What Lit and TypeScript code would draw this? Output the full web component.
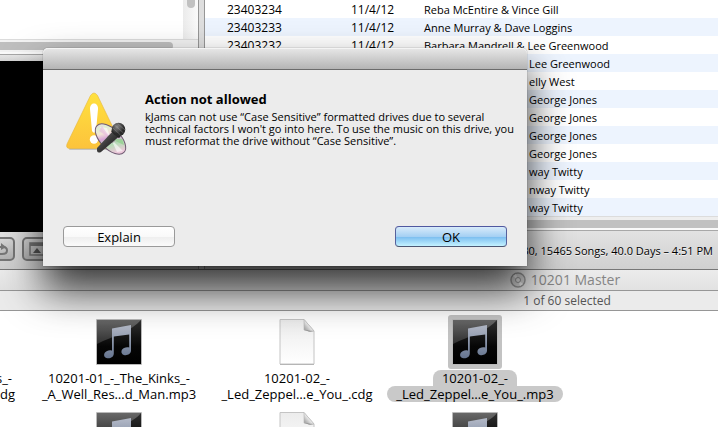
import { LitElement, html, css, svg } from "lit";
import { customElement, property } from "lit/decorators.js";
import { classMap } from "lit/directives/class-map.js";

const songs = [
  { id: "23403234", date: "11/4/12", artist: "Reba McEntire & Vince Gill" },
  { id: "23403233", date: "11/4/12", artist: "Anne Murray & Dave Loggins" },
  { id: "23403232", date: "11/4/12", artist: "Barbara Mandrell & Lee Greenwood" },
  { id: "", date: "", artist: "Lee Greenwood" },
  { id: "", date: "", artist: "elly West" },
  { id: "", date: "", artist: "George Jones" },
  { id: "", date: "", artist: "George Jones" },
  { id: "", date: "", artist: "George Jones" },
  { id: "", date: "", artist: "George Jones" },
  { id: "", date: "", artist: "way Twitty" },
  { id: "", date: "", artist: "nway Twitty" },
  { id: "", date: "", artist: "way Twitty" },
];

const files = [
  { kind: "cdg", lines: ["10201-01_-_The_Kinks_-", "_A_Well_Res…d_Man.cdg"], selected: false },
  { kind: "mp3", lines: ["10201-01_-_The_Kinks_-", "_A_Well_Res…d_Man.mp3"], selected: false },
  { kind: "cdg", lines: ["10201-02_-", "_Led_Zeppel…e_You_.cdg"], selected: false },
  { kind: "mp3", lines: ["10201-02_-", "_Led_Zeppel…e_You_.mp3"], selected: true },
  { kind: "cdg", lines: [], selected: false },
  { kind: "mp3", lines: [], selected: false },
  { kind: "cdg", lines: [], selected: false },
  { kind: "mp3", lines: [], selected: false },
];

const musicIcon = svg`
  <defs>
    <linearGradient id="gloss" x1="0" y1="0" x2="0" y2="1"><stop offset="0" stop-color="#686868"/><stop offset="1" stop-color="#303030"/></linearGradient>
    <linearGradient id="dark" x1="0" y1="0" x2="0" y2="1"><stop offset="0" stop-color="#303030"/><stop offset=".6" stop-color="#060606"/><stop offset="1" stop-color="#000"/></linearGradient>
    <linearGradient id="note" x1="0" y1="0" x2="0" y2="1"><stop offset="0" stop-color="#b4bac8"/><stop offset="1" stop-color="#65748f"/></linearGradient>
  </defs>
  <rect width="46" height="46" rx="1" fill="#b9b9b9"/>
  <rect x="1" y="1" width="44" height="44" fill="url(#dark)"/>
  <path d="M1 1H45C36 12 17 17 1 25Z" fill="url(#gloss)"/>
  <path d="M16 9.500 35 6V31.500C35 35 31 36.800 27.900 35.900 24.500 34.900 24.800 30.500 28 29 30 28 32 28 33.200 28.600V15.500L17.800 17.500V34.500C17.800 38.500 13.500 40 10.400 39 7.300 38 7.400 33.800 10.600 32.200 12.500 31.200 14.800 31 16 31.800Z" fill="url(#note)"/>`;

const documentIcon = svg`
  <defs>
    <linearGradient id="sheet" x1="0" y1="0" x2="0" y2="1"><stop offset="0" stop-color="#ececec"/><stop offset="1" stop-color="#fff"/></linearGradient>
    <linearGradient id="fold" x1="0" y1="1" x2="1" y2="0"><stop offset="0" stop-color="#8f8f8f"/><stop offset=".5" stop-color="#efefef"/><stop offset="1" stop-color="#fff"/></linearGradient>
  </defs>
  <path d="M6 .500H30L40 12V45H6Z" fill="url(#sheet)" stroke="#c4c4c4"/>
  <path d="M6 45.500H40" stroke="#b5b5b5"/>
  <path d="M30 .500 40 12 30 11Z" fill="url(#fold)" stroke="#b5b5b5" stroke-width=".6"/>
  <path d="M30 11 40 12.500 35 12.500Z" fill="#666"/>`;

const alertIcon = svg`
  <defs>
    <linearGradient id="warn" x1="0" y1="0" x2="0" y2="1"><stop offset="0" stop-color="#ffe13e"/><stop offset="1" stop-color="#fcc33c"/></linearGradient>
    <linearGradient id="disc" x1="0" y1="0" x2="1" y2=".3"><stop offset="0" stop-color="#e9d2ee"/><stop offset=".25" stop-color="#e0efd2"/><stop offset=".4" stop-color="#f2e3d8"/><stop offset=".55" stop-color="#d7a3d6"/><stop offset=".75" stop-color="#b4dcb4"/><stop offset="1" stop-color="#ecc8da"/></linearGradient>
    <linearGradient id="handle" x1="0" y1="0" x2="1" y2="1"><stop offset="0" stop-color="#777"/><stop offset=".5" stop-color="#3a3a3a"/><stop offset="1" stop-color="#111"/></linearGradient>
    <radialGradient id="head" cx=".4" cy=".3"><stop offset="0" stop-color="#8a8a8a"/><stop offset="1" stop-color="#2a2a2a"/></radialGradient>
  </defs>
  <path d="M4 58H53" stroke="#a9a9a9" stroke-width="2" stroke-linecap="round" opacity=".6"/>
  <path d="M24.500 4.500Q28 -.500 31.500 4.500L55 53Q56.500 57.500 52 57.500H4Q-.500 57.500 1 53Z" fill="url(#warn)" stroke="#e6b53c" stroke-width=".6"/>
  <path d="M24 18C23.500 10.500 32.500 10.500 32 18L30 40Q28 43.500 26 40Z" fill="#fff"/>
  <circle cx="28" cy="48.500" r="4.200" fill="#fff"/>
  <ellipse cx="44.500" cy="48" rx="19" ry="10" transform="rotate(45 44.500 48)" fill="url(#disc)" stroke="#6f5a72" stroke-width="1"/>
  <path d="M45 48 34 36 41 37ZM45 48 57 60 51 61Z" fill="#fff" opacity=".6"/>
  <path d="M45 48 36 35 33 40Z" fill="#e8b8e0" opacity=".6"/>
  <path d="M45 48 58 54 56 48Z" fill="#8fcf8a" opacity=".7"/>
  <ellipse cx="45" cy="48" rx="4" ry="2.500" transform="rotate(47 45 48)" fill="#ddd" stroke="#777" stroke-width=".6"/>
  <path d="M31 57 47 40 53 45.500 35 61Q32 62.500 31 60Z" fill="url(#handle)"/>
  <path d="M46 39 54 46" stroke="#222" stroke-width="3"/>
  <circle cx="52.500" cy="38.500" r="6.800" fill="url(#head)"/>
  <path d="M48.500 34 57.500 42M51.500 32.500 59 39M47 37 54.500 44" stroke="#aaa" stroke-width=".6" opacity=".6"/>`;

@customElement("file-item")
class FileItem extends LitElement {
  @property({ attribute: false }) file: (typeof files)[number] = files[0];

  static styles = css`
    :host { display: block; }
    .item { display: flex; flex-direction: column; align-items: center; height: 93px; }
    .frame { padding: 4px; border-radius: 3px; }
    .picture { display: block; width: 46px; height: 46px; }
    .label { display: flex; flex-direction: column; align-items: center; margin-top: 1px; }
    .line { font-size: 13px; line-height: 16px; padding: 0 9px; white-space: nowrap; }
    .selected .frame { background: #c3c3c3; }
    .selected .line { background: #c9c9c9; border-radius: 8px; }
    .selected .line:first-child { border-radius: 8px 8px 0 0; }
  `;

  render() {
    const { kind, lines, selected } = this.file;
    return html`
      <div class=${classMap({ item: true, selected })}>
        <div class="frame">
          <svg class="picture" viewBox="0 0 46 46" aria-hidden="true">${kind === "mp3" ? musicIcon : documentIcon}</svg>
        </div>
        <div class="label">${lines.map((l) => html`<span class="line">${l}</span>`)}</div>
      </div>`;
  }
}

@customElement("alert-dialog")
class AlertDialog extends LitElement {
  static styles = css`
    :host { display: block; }
    .dialog {
      background: #ececec;
      border-radius: 5px 5px 0 0;
      box-shadow: 0 0 1px rgba(0, 0, 0, 0.7), 0 23px 42px rgba(0, 0, 0, 0.8);
    }
    .bar {
      height: 21px;
      border-bottom: 1px solid #6b6b6b;
      border-radius: 5px 5px 0 0;
      background: linear-gradient(#e8e8e8, #b4b4b4);
      box-shadow: inset 0 1px #f4f4f4;
    }
    .content { display: flex; gap: 15px; padding: 20px 10px 0 23px; height: 136px; box-sizing: border-box; }
    .icon { flex: none; width: 64px; height: 66px; margin-top: 1px; }
    .title { margin: 0; font-size: 13px; line-height: 18px; font-weight: 700; }
    .message { margin: 3px 0 0; font-size: 11px; line-height: 12px; }
    .message span { display: block; white-space: nowrap; }
    .actions { display: flex; justify-content: space-between; padding: 20px 20px 19px; }
    button {
      width: 112px;
      height: 21px;
      padding: 0;
      border: 1px solid #9a9a9a;
      border-radius: 4px;
      font: 13px/18px "Open Sans", "Noto Sans", sans-serif;
      color: #000;
      background: linear-gradient(#fff, #f9f9f9 50%, #eee 52%, #fafafa);
    }
    .primary {
      border-color: #5058a0 #56619c #4c5672;
      background: linear-gradient(#d8ebfa, #a5d0f3 50%, #7dbff0 54%, #c4f2ff);
    }
  `;

  render() {
    return html`
      <section class="dialog" role="alertdialog" aria-labelledby="title" aria-describedby="message">
        <div class="bar"></div>
        <div class="content">
          <svg class="icon" viewBox="0 0 64 66" aria-hidden="true">${alertIcon}</svg>
          <div>
            <h1 class="title" id="title">Action not allowed</h1>
            <p class="message" id="message">
              <span>kJams can not use “Case Sensitive” formatted drives due to several</span>
              <span>technical factors I won't go into here. To use the music on this drive, you</span>
              <span>must reformat the drive without “Case Sensitive”.</span>
            </p>
          </div>
        </div>
        <div class="actions">
          <button type="button">Explain</button>
          <button type="button" class="primary">OK</button>
        </div>
      </section>`;
  }
}

@customElement("app-root")
class AppRoot extends LitElement {
  static styles = css`
    :host {
      display: flex;
      flex-direction: column;
      position: relative;
      height: 100vh;
      overflow: hidden;
      background: #fff;
      color: #000;
      font-family: "Open Sans", "Noto Sans", sans-serif;
    }
    .player { display: flex; flex: none; border-bottom: 1px solid #777; background: #dcdcdc; }
    .side { flex: none; width: 198px; display: flex; flex-direction: column; }
    .list { display: flex; height: 39px; background: #fff; }
    .blank { flex: 1; }
    .track { width: 15px; background: linear-gradient(90deg, #ebebeb, #fafafa); display: flex; justify-content: center; }
    .thumb { width: 8px; height: 8px; border-radius: 0 0 4px 4px; background: #c1c1c1; }
    .hscroll { display: flex; align-items: center; height: 12px; border-top: 1px solid #dcdcdc; background: #f3f3f3; border-bottom: 2px solid #fafafa; }
    .hthumb { width: 173px; height: 8px; border-radius: 0 4px 4px 0; background: #bfbfbf; }
    .strip { height: 6px; border-top: 1px solid #a6a6a6; background: linear-gradient(#e6e6e6, #d4d4d4); }
    .video { height: 171px; background: #000; }
    .tools { display: flex; gap: 7px; height: 37px; box-sizing: border-box; padding: 5px 0 0; margin-left: -13px; background: linear-gradient(#e2e2e2, #cfcfcf); }
    .tool { display: flex; align-items: center; justify-content: center; width: 28px; height: 24px; padding: 0; border: 2px solid #777; border-radius: 5px; background: linear-gradient(#d8d8d8, #b4b4b4); }
    .tool svg { flex: none; width: 16px; height: 14px; }
    .divider { flex: none; width: 5px; border: solid #969696; border-width: 0 1px; background: #dedede; }
    .main { flex: 1; min-width: 0; display: flex; flex-direction: column; }
    table { width: 100%; border-collapse: collapse; table-layout: fixed; background: #fff; font-size: 12px; }
    td { height: 17px; line-height: 17px; padding: 1px 0 0; white-space: nowrap; }
    tr:nth-child(even) { background: #edf4fe; }
    .id-column { width: 146px; }
    .date-column { width: 73px; }
    .id { padding-left: 22px; }
    .artist { font-size: 11px; }
    .tail { padding-left: 105px; }
    .bottom { height: 14px; box-sizing: border-box; border-top: 1px solid #dcdcdc; border-bottom: 2px solid #fafafa; padding-top: 3px; background: #eee; }
    .grip { height: 8px; background: #c1c1c1; }
    .status { flex: 1; display: flex; align-items: center; justify-content: flex-end; padding-right: 5px; border-top: 1px solid #a8a8a8; background: linear-gradient(#e2e2e2, #d0d0d0); font-size: 11px; text-shadow: 0 1px rgba(255, 255, 255, 0.7); }
    .folder { display: flex; flex: 1; min-height: 0; flex-direction: column; }
    .heading { display: flex; flex: none; align-items: center; justify-content: center; gap: 5px; height: 20px; padding-left: 412px; border-bottom: 1px solid #969696; background: linear-gradient(#ececec, #e2e2e2); }
    .heading svg { width: 16px; height: 16px; }
    .name { margin: 0; font-size: 14px; line-height: 20px; font-weight: 400; color: #858585; }
    .count { flex: none; height: 19px; line-height: 19px; padding-left: 416px; border-bottom: 1px solid #969696; background: #ebebeb; text-align: center; font-size: 12px; color: #555; }
    .files { display: grid; grid-template-columns: repeat(4, 178px); margin: 4px 0 0 -148px; flex: 1; min-height: 0; overflow: hidden; }
    .alert { position: absolute; top: 48px; left: 43px; width: 484px; }
  `;

  render() {
    return html`
      <section class="player">
        <div class="side">
          <div class="list"><div class="blank"></div><div class="track"><div class="thumb"></div></div></div>
          <div class="hscroll"><div class="hthumb"></div></div>
          <div class="strip"></div>
          <div class="video"></div>
          <div class="tools">
            <button class="tool" type="button" aria-label="Repeat">
              <svg viewBox="0 0 16 14"><path d="M3 10.500Q5 12 9 12 14 12 14 8.500T10 5H5" fill="none" stroke="#777" stroke-width="2"/><path d="M8 1 13 5 8 8Z" fill="#777"/></svg>
            </button>
            <button class="tool" type="button" aria-label="Show video">
              <svg viewBox="0 0 16 14"><path d="M2 1H16V13H2Z" fill="none" stroke="#777" stroke-width="1.500"/><path d="M2 1H16V4H2Z" fill="#777"/><path d="M9 6 13 11H5Z" fill="#555"/></svg>
            </button>
          </div>
        </div>
        <div class="divider"></div>
        <div class="main">
          <table>
            <colgroup><col class="id-column" /><col class="date-column" /><col /></colgroup>
            <tbody>
              ${songs.map(({ id, date, artist }) => html`
                <tr>
                  <td class="id">${id}</td>
                  <td>${date}</td>
                  <td class=${classMap({ artist: true, tail: !id })}>${artist}</td>
                </tr>`)}
            </tbody>
          </table>
          <div class="bottom"><div class="grip"></div></div>
          <div class="status">30, 15465 Songs, 40.0 Days – 4:51 PM</div>
        </div>
      </section>
      <section class="folder">
        <header class="heading">
          <svg viewBox="0 0 16 16" aria-hidden="true">
            <circle cx="8" cy="8" r="7" fill="#d6d6d6" stroke="#999" stroke-width="1.500"/>
            <path d="M8 8 3 4 6 2ZM8 8 13 12 10 14Z" fill="#f3f3f3"/>
            <circle cx="8" cy="8" r="2.500" fill="#e6e6e6" stroke="#999"/>
          </svg>
          <h2 class="name">10201 Master</h2>
        </header>
        <div class="count">1 of 60 selected</div>
        <div class="files">${files.map((f) => html`<file-item .file=${f}></file-item>`)}</div>
      </section>
      <alert-dialog class="alert"></alert-dialog>`;
  }
}
